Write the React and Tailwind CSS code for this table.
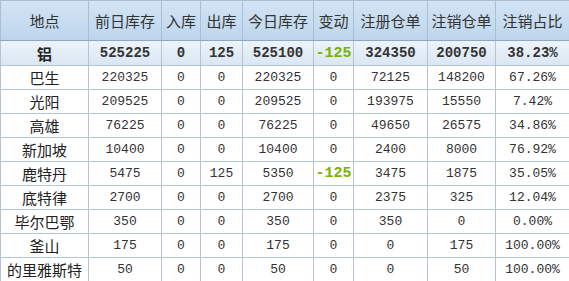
import React from "react";

const cols = [88, 73, 39, 42, 71, 40, 74, 68, 74];
const heads = ["地点", "前日库存", "入库", "出库", "今日库存", "变动", "注册仓单", "注销仓单", "注销占比"];

const total = ["铝", "525225", "0", "125", "525100", "-125", "324350", "200750", "38.23%"];

const rows = [
  ["巴生", "220325", "0", "0", "220325", "0", "72125", "148200", "67.26%"],
  ["光阳", "209525", "0", "0", "209525", "0", "193975", "15550", "7.42%"],
  ["高雄", "76225", "0", "0", "76225", "0", "49650", "26575", "34.86%"],
  ["新加坡", "10400", "0", "0", "10400", "0", "2400", "8000", "76.92%"],
  ["鹿特丹", "5475", "0", "125", "5350", "-125", "3475", "1875", "35.05%"],
  ["底特律", "2700", "0", "0", "2700", "0", "2375", "325", "12.04%"],
  ["毕尔巴鄂", "350", "0", "0", "350", "0", "350", "0", "0.00%"],
  ["釜山", "175", "0", "0", "175", "0", "0", "175", "100.00%"],
  ["的里雅斯特", "50", "0", "0", "50", "0", "0", "50", "100.00%"],
];

const cjk = "font-['Noto_Sans_CJK_SC',sans-serif]";
const mono = "font-['Liberation_Mono','Noto_Sans_CJK_SC',monospace]";

const Cell = ({ value, i, bold }) => {
  if (i === 0) {
    return (
      <td className={`border border-[#b3c4d6] text-center text-[15px] leading-none text-[#222] ${cjk} ${bold ? "font-bold" : ""}`}>
        {value}
      </td>
    );
  }
  if (value === "-125") {
    return (
      <td className={`border border-[#b3c4d6] text-center text-[15px] leading-none font-bold text-[#77b300] ${mono}`}>
        {value}
      </td>
    );
  }
  return (
    <td className={`border border-[#b3c4d6] text-center leading-none text-[#333] ${mono} ${bold ? "font-bold text-[14px] text-[#222]" : "text-[13px]"}`}>
      {value}
    </td>
  );
};

export default function App() {
  return (
    <div className="w-[569px] h-[281px] overflow-hidden bg-white">
      <table className="table-fixed border-collapse w-[569px]">
        <colgroup>
          {cols.map((w, i) => (
            <col key={i} style={{ width: w }} />
          ))}
        </colgroup>
        <thead>
          <tr className="h-[40px] bg-gradient-to-b from-[#d3e4f4] to-[#bcd5ec]">
            {heads.map((h) => (
              <th key={h} className={`border border-[#a9bdd3] border-b-[#8ea7c2] text-center font-normal text-[15px] leading-none text-[#333] ${cjk}`}>
                {h}
              </th>
            ))}
          </tr>
        </thead>
        <tbody>
          <tr className="h-[25px] bg-gradient-to-b from-[#edf3fa] to-[#d9e6f3]">
            {total.map((v, i) => (
              <Cell key={i} value={v} i={i} bold />
            ))}
          </tr>
          {rows.map((r) => (
            <tr key={r[0]} className="h-[24px] bg-white">
              {r.map((v, i) => (
                <Cell key={i} value={v} i={i} />
              ))}
            </tr>
          ))}
        </tbody>
      </table>
    </div>
  );
}
